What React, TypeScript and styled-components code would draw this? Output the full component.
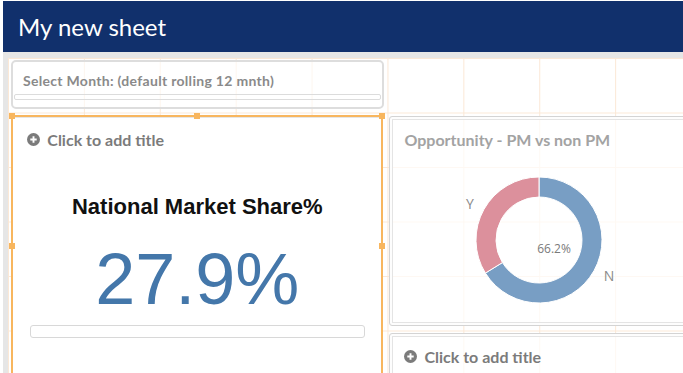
import React from "react";
import styled, { createGlobalStyle } from "styled-components";

const GlobalStyle = createGlobalStyle`
  html, body {
    margin: 0;
    padding: 0;
    background: #ffffff;
    overflow: hidden;
  }
  body {
    font-family: Lato, "Open Sans", sans-serif;
  }
`;

const COL = 75.9;
const ROW = 54.5;

const Page = styled.div`
  width: 683px;
  height: 373px;
  overflow: hidden;
  padding-left: 3px;
  box-sizing: border-box;
  display: flex;
  flex-direction: column;
`;

const SheetHeader = styled.header`
  flex: none;
  margin-top: 1px;
  height: 51px;
  background: #11306c;
  display: flex;
  align-items: center;
  padding-left: 15px;
`;

const SheetTitle = styled.h1`
  margin: 0;
  font: 400 24px Lato, sans-serif;
  color: #ffffff;
`;

const Workspace = styled.div`
  flex: 1;
  min-height: 0;
  background: #e6e6e6;
  padding: 5.5px 0 0 5px;
  overflow: hidden;
`;

const Canvas = styled.div`
  display: grid;
  grid-template-columns: repeat(9, ${COL}px);
  grid-template-rows: repeat(6, ${ROW}px);
  height: ${ROW * 6}px;
  background-color: #ffffff;
  background-image: linear-gradient(to right, #fbe8d6 1px, transparent 1px),
    linear-gradient(to bottom, #fbe8d6 1px, transparent 1px);
  background-size: ${COL}px ${ROW}px;
`;

const Tile = styled.section<{ $col: string; $row: string; $m: string }>`
  grid-column: ${(p) => p.$col};
  grid-row: ${(p) => p.$row};
  margin: ${(p) => p.$m};
  position: relative;
  box-sizing: border-box;
  min-width: 0;
  min-height: 0;
  display: flex;
  flex-direction: column;
  background: rgba(255, 255, 255, 0.7);
  border: 1px solid #d4d4d4;
  border-radius: 3px;
  box-shadow: inset 0 0 0 2px rgba(255, 255, 255, 0.9), inset 0 0 0 3px #e4e4e4;
`;

const SelectedTile = styled(Tile)`
  background: #ffffff;
  border: 2px solid #f8b65e;
  border-radius: 0;
  box-shadow: inset 0 1px 0 #e6e6e6;
`;

const Handle = styled.span<{ $x: number; $y: number }>`
  position: absolute;
  width: 6px;
  height: 6px;
  background: #f8b65e;
  left: calc(${(p) => p.$x}% + ${(p) => (p.$x - 50) / 50}px);
  top: calc(${(p) => p.$y}% + ${(p) => (p.$y - 50) / 50}px);
  transform: translate(-50%, -50%);
`;

const FilterPane = styled.section`
  grid-column: 1 / 6;
  grid-row: 1 / 2;
  margin: 2.5px 3.5px 3px 3px;
  box-sizing: border-box;
  border: 2px solid #dddddd;
  border-radius: 5px;
  background: rgba(255, 255, 255, 0.6);
  display: flex;
  flex-direction: column;
`;

const FilterLabel = styled.div`
  padding: 10px 0 0 10px;
  height: 16px;
  line-height: 16px;
  font: 700 14px Lato, sans-serif;
  letter-spacing: 0.3px;
  color: #8a8a8a;
  white-space: nowrap;
`;

const ListBox = styled.div`
  margin: 6px 1px 0 1px;
  height: 6px;
  box-sizing: border-box;
  border: 1px solid #dcdcdc;
  border-radius: 2px;
`;

const TitleRow = styled.div<{ $muted?: boolean }>`
  display: flex;
  align-items: center;
  gap: 7px;
  padding: 14px 0 0 14px;
  height: 18px;
  line-height: 18px;
  font: 700 16px Lato, sans-serif;
  color: ${(p) => (p.$muted ? "#a3a3a3" : "#7b7b7b")};
  white-space: nowrap;
`;

const KpiBody = styled.div`
  display: flex;
  flex-direction: column;
  align-items: center;
`;

const MeasureLabel = styled.div`
  margin-top: 45.7px;
  height: 26px;
  line-height: 26px;
  font: 700 22px "Liberation Sans", Arial, sans-serif;
  color: #111111;
  white-space: nowrap;
`;

const MeasureValue = styled.div`
  margin-top: 17.6px;
  height: 72px;
  line-height: 72px;
  font: 400 72px "Liberation Sans", Arial, sans-serif;
  color: #4477aa;
  white-space: nowrap;
`;

const ProgressBar = styled.div`
  align-self: stretch;
  margin: 15px 16px 0 17px;
  height: 12.7px;
  box-sizing: border-box;
  border: 1px solid #d8d8d8;
  border-radius: 3px;
`;

const ChartArea = styled.div`
  flex: 1;
  display: flex;
  align-items: center;
  justify-content: center;
  padding-top: 7px;
`;

const PlusIcon = () => (
  <svg width="13" height="13" viewBox="0 0 13 13">
    <circle cx="6.5" cy="6.5" r="6.5" fill="#7b7b7b" />
    <path d="M6.5 3.3v6.4M3.3 6.5h6.4" stroke="#fff" strokeWidth="1.9" />
  </svg>
);

const AddTitle = () => (
  <TitleRow>
    <PlusIcon />
    <span>Click to add title</span>
  </TitleRow>
);

const arc = (a0: number, a1: number, R: number, r: number) => {
  const pt = (a: number, rad: number) => {
    const t = (a * Math.PI) / 180;
    return `${(rad * Math.sin(t)).toFixed(2)} ${(-rad * Math.cos(t)).toFixed(2)}`;
  };
  const large = a1 - a0 > 180 ? 1 : 0;
  return `M${pt(a0, R)} A${R} ${R} 0 ${large} 1 ${pt(a1, R)} L${pt(a1, r)} A${r} ${r} 0 ${large} 0 ${pt(a0, r)} Z`;
};

const Donut = ({ share }: { share: number }) => {
  const split = share * 360;
  return (
    <svg width="220" height="150" viewBox="-110 -75 220 150">
      <path d={arc(0, split, 63, 43)} fill="#789ec4" stroke="#fff" strokeWidth="1" />
      <path d={arc(split, 360, 63, 43)} fill="#dc909c" stroke="#fff" strokeWidth="1" />
      <text x="15" y="8" fontSize="12" fill="#7a7a7a" textAnchor="middle" dominantBaseline="central" fontFamily="'Open Sans', sans-serif">
        66.2%
      </text>
      <text x="-69" y="-37" fontSize="14" fill="#8a8a8a" textAnchor="middle" dominantBaseline="central" fontFamily="'Open Sans', sans-serif">
        Y
      </text>
      <text x="70" y="35" fontSize="14" fill="#8a8a8a" textAnchor="middle" dominantBaseline="central" fontFamily="'Open Sans', sans-serif">
        N
      </text>
    </svg>
  );
};

const App = () => (
  <Page>
    <GlobalStyle />
    <SheetHeader>
      <SheetTitle>My new sheet</SheetTitle>
    </SheetHeader>
    <Workspace>
      <Canvas>
        <FilterPane>
          <FilterLabel>Select Month: (default rolling 12 mnth)</FilterLabel>
          <ListBox />
        </FilterPane>

        <SelectedTile $col="1 / 6" $row="2 / 7" $m="2.7px 4.2px 7.8px 3.3px">
          <AddTitle />
          <KpiBody>
            <MeasureLabel>National Market Share%</MeasureLabel>
            <MeasureValue>27.9%</MeasureValue>
            <ProgressBar />
          </KpiBody>
          <Handle $x={0} $y={0} />
          <Handle $x={50} $y={0} />
          <Handle $x={100} $y={0} />
          <Handle $x={0} $y={50} />
          <Handle $x={100} $y={50} />
          <Handle $x={0} $y={100} />
          <Handle $x={50} $y={100} />
          <Handle $x={100} $y={100} />
        </SelectedTile>

        <Tile $col="6 / 10" $row="2 / 6" $m="3.5px 3px 4px 2px">
          <TitleRow $muted>Opportunity - PM vs non PM</TitleRow>
          <ChartArea>
            <Donut share={0.662} />
          </ChartArea>
        </Tile>

        <Tile $col="6 / 10" $row="6 / 7" $m="2.5px 3px 0 2px">
          <AddTitle />
        </Tile>
      </Canvas>
    </Workspace>
  </Page>
);

export default App;
